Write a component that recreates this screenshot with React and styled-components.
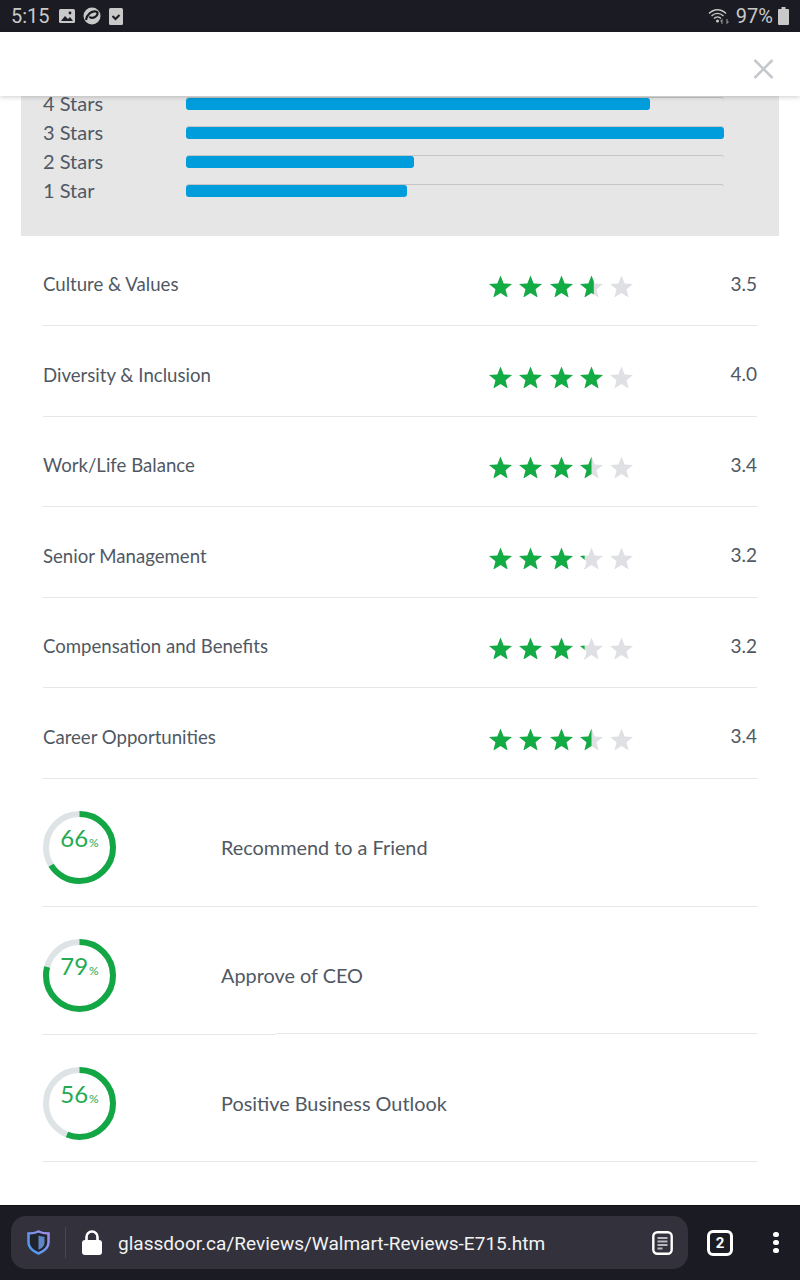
import React, { useId } from "react";
import styled, { createGlobalStyle } from "styled-components";

const Global = createGlobalStyle`
  html, body { margin: 0; padding: 0; background: #fff; }
  #root { width: 800px; height: 1280px; }
  * { box-sizing: border-box; }
`;

const Screen = styled.div`
  width: 800px; height: 1280px; display: flex; flex-direction: column; overflow: hidden;
  background: #fff; font-family: Lato, "Noto Sans", sans-serif; color: #505863;
`;
const StatusBar = styled.div`
  height: 32px; flex: none; background: #1b1b23; color: #c9c9c9; display: flex; align-items: center;
  padding: 0 11px 0 11px; font-family: Roboto, sans-serif; font-size: 20px;
`;
const Time = styled.span` width: 48px; `;
const StatusIcons = styled.div` display: flex; align-items: center; gap: 8px; flex: 1; `;
const Level = styled.span` margin: 0 5px 0 6px; font-size: 20px; `;
const Header = styled.div`
  height: 64px; flex: none; background: #fff; position: relative; z-index: 2;
  box-shadow: 0 1px 5px rgba(0,0,0,.2); display: flex; justify-content: flex-end; align-items: center;
  padding: 10px 26px 0 0;
`;
const Main = styled.div` flex: 1; min-height: 0; overflow: hidden; `;
const Panel = styled.div`
  margin: -7px 21px 0; height: 146.5px; background: #e6e6e6; padding: 0 55px 0 22px;
`;
const BarRow = styled.div`
  height: 29px; display: grid; grid-template-columns: 143px 1fr; align-items: center;
  font-size: 20px;
`;
const BarLabel = styled.span` line-height: 14px; margin-bottom: 2px; `;
const Track = styled.div`
  height: 13px; border-top: 1px solid #c4c4c4; border-radius: 3px 3px 0 0;
`;
const Fill = styled.div`
  height: 12px; background: #009ddc; border-radius: 3px;
`;
const List = styled.div` padding: 0 43px; `;
const RatingRow = styled.div`
  height: 90.5px; border-bottom: 1px solid #e6e6e6; display: grid; grid-template-columns: 446px 1fr auto;
  align-items: center; font-size: 18.6px; padding-top: 6px;
`;
const RatingLabel = styled.span` margin-top: 2px; `;
const Stars = styled.div` display: flex; gap: 7.25px; transform: translateY(3.5px); `;
const Value = styled.div` font-size: 19px; `;
const GaugeRow = styled.div`
  height: ${p => p.$h}px; border-bottom: 1px solid #e6e6e6; display: flex; align-items: center;
  font-size: 19.85px; padding-top: ${p => p.$pad}px; position: relative;
  ${p => p.$seam && `
    &::before { content: ""; position: absolute; left: 0; bottom: -1px; width: 233px; height: 1px; background: #fff; }
    &::after { content: ""; position: absolute; left: 0; bottom: -2px; width: 233px; height: 1px; background: #e6e6e6; }
  `}
`;
const GaugeLabel = styled.span` margin-bottom: 1px; `;
const Gauge = styled.div`
  width: 73px; height: 73px; display: grid; margin-right: 105px; flex: none;
  & > * { grid-area: 1 / 1; }
`;
const GaugeText = styled.div`
  display: flex; justify-content: center; align-items: baseline; padding-top: 12px;
  font-size: 24px; font-weight: 400; color: #25ab53; line-height: 30px;
`;
const Percent = styled.span` font-size: 12px; margin-left: 1px; `;
const BottomBar = styled.div`
  height: 75px; flex: none; background: #1b1b23; display: flex; align-items: center;
  padding: 0 0 1px 11px; border-top: 1px solid #111;
`;
const UrlPill = styled.div`
  width: 677px; height: 53px; background: #33323c; border-radius: 15px; display: flex; align-items: center;
  padding: 0 15px 0 16px;
`;
const Divider = styled.div` width: 1px; height: 31px; background: #4a4953; margin: 0 16px 0 15px; `;
const Url = styled.div`
  flex: 1; margin: 1px 0 0 16px; color: #f2f2f4; font-family: Roboto, sans-serif; font-size: 19.05px; white-space: nowrap;
`;
const TabCount = styled.div`
  width: 26px; height: 26px; border: 3px solid #fff; border-radius: 6px; color: #fff; margin-left: 19px;
  display: flex; align-items: center; justify-content: center; font: 700 15px Roboto, sans-serif;
`;
const Dots = styled.div`
  display: flex; flex-direction: column; gap: 2.5px; margin-left: 40px;
`;
const Dot = styled.span` width: 5.5px; height: 5.5px; border-radius: 50%; background: #fff; `;

const STAR = "11.5,0 14.6,7.9 23,8.4 16.5,13.8 18.6,22 11.5,17.5 4.4,22 6.5,13.8 0,8.4 8.4,7.9";

function Star({ fill }) {
  const id = useId();
  return (
    <svg width="23" height="22" viewBox="0 0 23 22">
      <clipPath id={id}><rect width={23 * fill} height="22" /></clipPath>
      <polygon points={STAR} fill="#dfe0e4" />
      <polygon points={STAR} fill="#12ab44" clipPath={`url(#${id})`} />
    </svg>
  );
}

function Donut({ pct }) {
  const r = 33.5, c = 2 * Math.PI * r;
  return (
    <Gauge>
      <svg width="73" height="73" viewBox="0 0 73 73">
        <circle cx="36.5" cy="36.5" r={r} fill="none" stroke="#dee3e6" strokeWidth="6" />
        <circle cx="36.5" cy="36.5" r={r} fill="none" stroke="#12a644" strokeWidth="6"
          strokeDasharray={`${c * pct / 100} ${c}`} transform="rotate(-90 36.5 36.5)" />
      </svg>
      <GaugeText><span>{pct}</span><Percent>%</Percent></GaugeText>
    </Gauge>
  );
}

const bars = [["4 Stars", 464], ["3 Stars", 538], ["2 Stars", 228], ["1 Star", 221]];
const ratings = [
  ["Culture & Values", "3.5", [1, 1, 1, 0.6, 0]],
  ["Diversity & Inclusion", "4.0", [1, 1, 1, 1, 0]],
  ["Work/Life Balance", "3.4", [1, 1, 1, 0.5, 0]],
  ["Senior Management", "3.2", [1, 1, 1, 0.2, 0]],
  ["Compensation and Benefits", "3.2", [1, 1, 1, 0.2, 0]],
  ["Career Opportunities", "3.4", [1, 1, 1, 0.5, 0]],
];
const gauges = [
  [66, "Recommend to a Friend", 128, 10, false],
  [79, "Approve of CEO", 127, 12, true],
  [56, "Positive Business Outlook", 128, 12, false],
];

export default function App() {
  const gid = useId();
  return (
    <Screen>
      <Global />
      <StatusBar>
        <Time>5:15</Time>
        <StatusIcons>
          <svg width="16" height="16" viewBox="0 0 16 16">
            <rect y="1" width="16" height="14" rx="1.5" fill="#c9c9c9" />
            <path d="M2 13l4-5 3 3 2-2 3 4z" fill="#1b1b23" /><circle cx="11" cy="5" r="1.4" fill="#1b1b23" />
          </svg>
          <svg width="18" height="18" viewBox="0 0 18 18">
            <circle cx="9" cy="9" r="8.5" fill="#c9c9c9" />
            <path d="M3 13C4 7 9 3.5 13 4.5c2.5.7 1.8 4-1 5.500-2.500 1.300-5 1-5.500-.5" fill="none" stroke="#1b1b23" strokeWidth="2.200" />
          </svg>
          <svg width="14" height="17" viewBox="0 0 14 17">
            <rect width="14" height="17" rx="1.500" fill="#c9c9c9" />
            <path d="M3.500 8l3 3 4-4" fill="none" stroke="#1b1b23" strokeWidth="2" />
          </svg>
        </StatusIcons>
        <svg width="22" height="18" viewBox="0 0 22 18">
          <g fill="none" stroke="#c9c9c9" strokeWidth="1.400">
            <path d="M1 6.500C6 1.500 13 1.500 18 6.500" /><path d="M3.500 9C7 5.500 12 5.500 15.500 9" /><path d="M6 11.500c2-2 5-2 7 0" />
          </g>
          <circle cx="9.500" cy="14" r="1.500" fill="#c9c9c9" />
          <path d="M14 17v-4l-1.500 1.500M19 12v4l1.500-1.500" fill="none" stroke="#8a8a8a" strokeWidth="1.200" />
        </svg>
        <Level>97%</Level>
        <svg width="11" height="18" viewBox="0 0 11 18">
          <path d="M3.500 0h4v2H10a1 1 0 011 1v14a1 1 0 01-1 1H1a1 1 0 01-1-1V3a1 1 0 011-1h2.500z" fill="#c9c9c9" />
        </svg>
      </StatusBar>
      <Header>
        <svg width="21" height="20" viewBox="0 0 21 20">
          <path d="M1.500 1l18 18M19.500 1l-18 18" stroke="#c4c7cc" strokeWidth="2.500" fill="none" />
        </svg>
      </Header>
      <Main>
        <Panel>
          {bars.map(([label, w]) => (
            <BarRow key={label}>
              <BarLabel>{label}</BarLabel>
              <Track><Fill style={{ width: w }} /></Track>
            </BarRow>
          ))}
        </Panel>
        <List>
          {ratings.map(([label, value, stars]) => (
            <RatingRow key={label}>
              <RatingLabel>{label}</RatingLabel>
              <Stars>{stars.map((f, i) => <Star key={i} fill={f} />)}</Stars>
              <Value>{value}</Value>
            </RatingRow>
          ))}
          {gauges.map(([pct, label, h, pad, seam]) => (
            <GaugeRow key={label} $h={h} $pad={pad} $seam={seam}>
              <Donut pct={pct} />
              <GaugeLabel>{label}</GaugeLabel>
            </GaugeRow>
          ))}
        </List>
      </Main>
      <BottomBar>
        <UrlPill>
          <svg width="23" height="25" viewBox="0 0 23 25">
            <defs>
              <linearGradient id={gid} x1="0" y1="1" x2="1" y2="0">
                <stop offset="0" stopColor="#3e9be8" /><stop offset="1" stopColor="#a98df0" />
              </linearGradient>
            </defs>
            <path d="M11.500 1.500c3 1.500 6 2 10 2v9c0 5-4 8.500-10 11-6-2.500-10-6-10-11v-9c4 0 7-.5 10-2z" fill="#20222e" stroke={`url(#${gid})`} strokeWidth="2.500" />
            <path d="M11.500 5.500c2 .8 4 1.200 6 1.300v5.700c0 3.500-2.500 5.800-6 7.300z" fill="#5f86c4" />
          </svg>
          <Divider />
          <svg width="20" height="25" viewBox="0 0 20 25">
            <path d="M4.500 11V7a5.500 5.500 0 0111 0v4" fill="none" stroke="#fff" strokeWidth="2.600" />
            <rect y="10" width="20" height="15" rx="3" fill="#fff" />
          </svg>
          <Url>glassdoor.ca/Reviews/Walmart-Reviews-E715.htm</Url>
          <svg width="21" height="24" viewBox="0 0 21 24">
            <rect x="1.300" y="1.300" width="18.400" height="21.400" rx="4" fill="none" stroke="#fff" strokeWidth="2.400" />
            <path d="M5.500 7h10M5.500 10.500h10M5.500 14h10M5.500 17.500h5" stroke="#b9b9bd" strokeWidth="2" />
          </svg>
        </UrlPill>
        <TabCount>2</TabCount>
        <Dots><Dot /><Dot /><Dot /></Dots>
      </BottomBar>
    </Screen>
  );
}
